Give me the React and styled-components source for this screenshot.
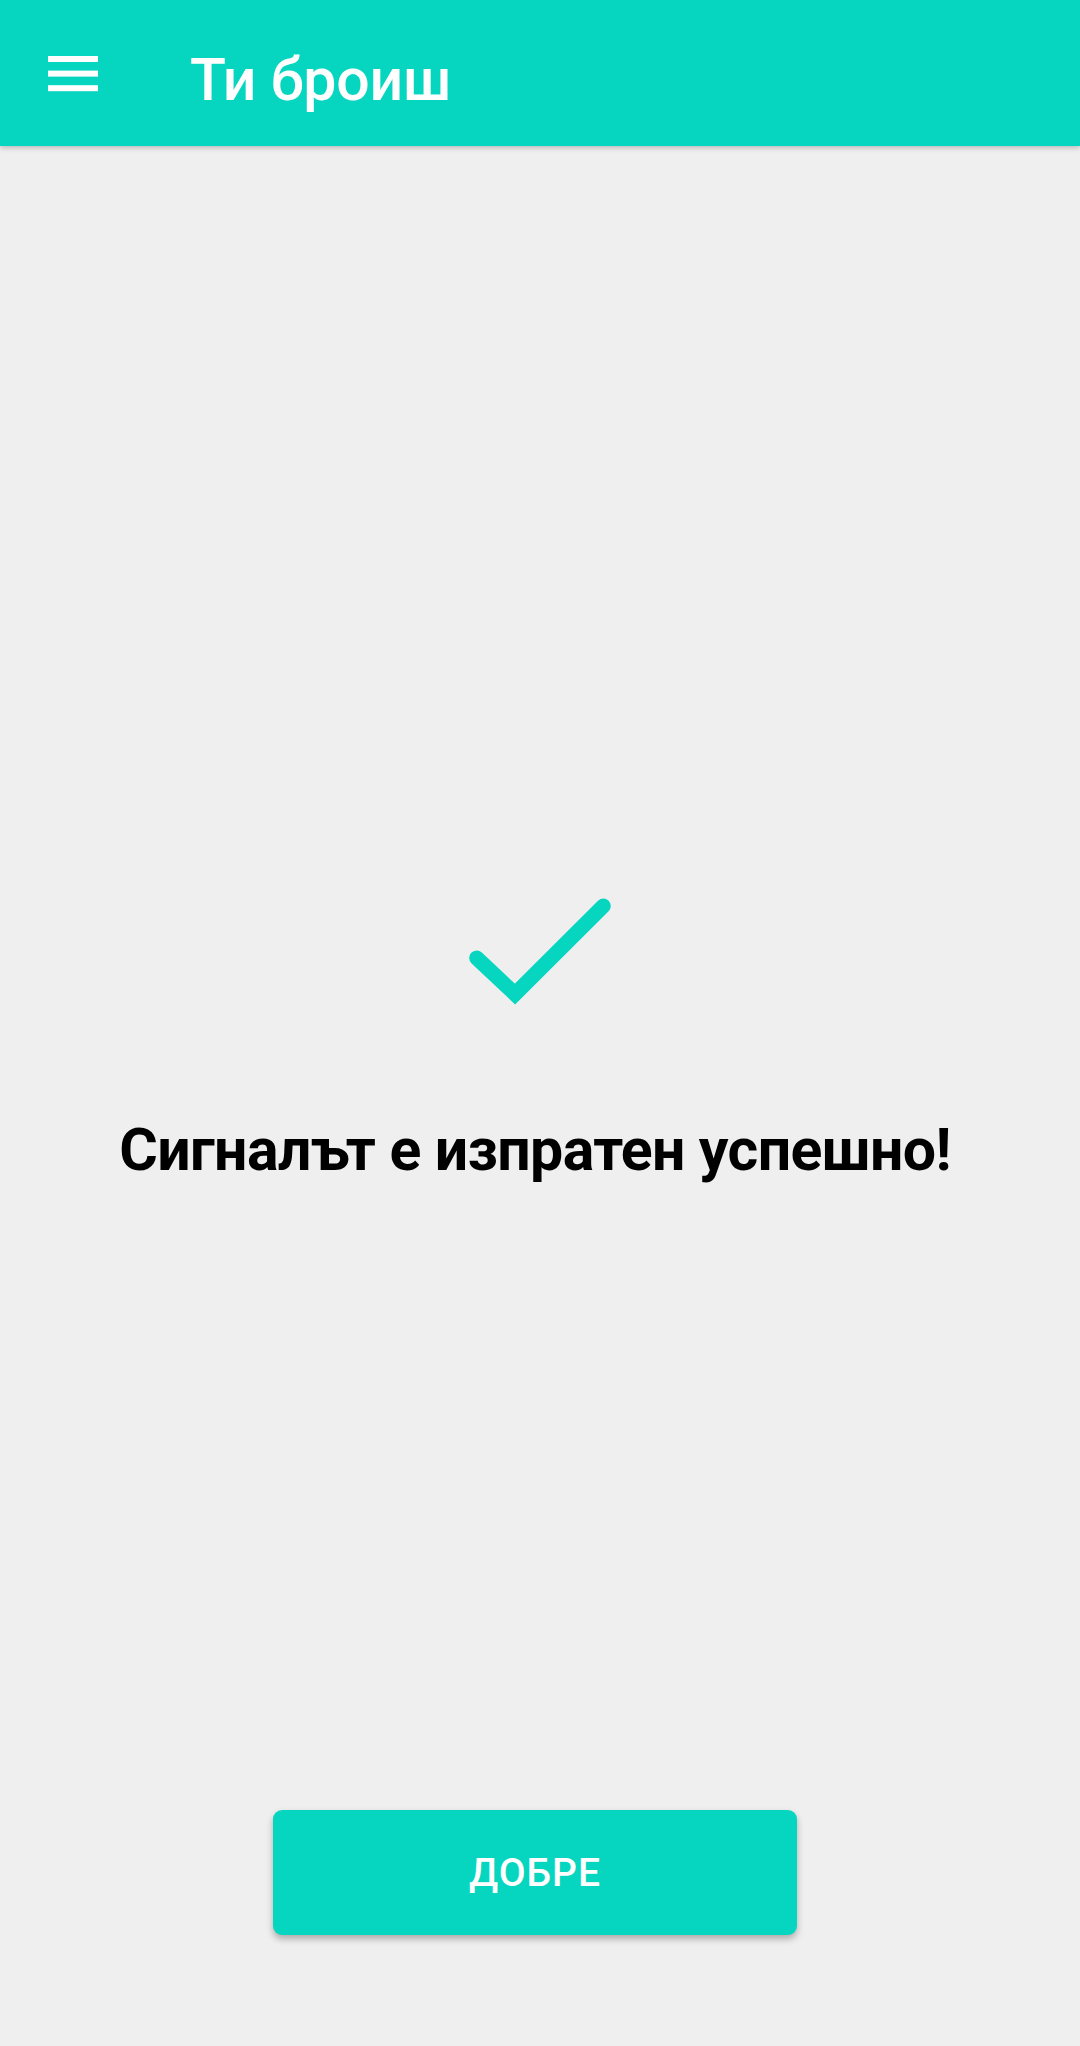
import React from "react";
import styled, { createGlobalStyle } from "styled-components";

const GlobalStyle = createGlobalStyle`
  html, body { margin: 0; padding: 0; background: #efefef; }
  body { font-family: Roboto, "Noto Sans", "Liberation Sans", sans-serif; }
  * { box-sizing: border-box; }
`;

const Page = styled.div`
  min-height: 100vh;
  display: flex;
  flex-direction: column;
  background: #efefef;
`;

const Toolbar = styled.header`
  height: 146px;
  background: #06d6c0;
  display: flex;
  align-items: center;
  padding-left: 40px;
  box-shadow: 0 2px 5px rgba(0, 0, 0, 0.22);
  position: relative;
  z-index: 1;
  flex-shrink: 0;
`;

const MenuButton = styled.button`
  width: 66px;
  height: 66px;
  padding: 0;
  border: none;
  background: transparent;
  display: flex;
  align-items: center;
  justify-content: center;
  margin-top: 2px;
`;

const Title = styled.h1`
  margin: 13px 0 0 84px;
  font-size: 59px;
  line-height: 70px;
  font-weight: 500;
  color: #ffffff;
  letter-spacing: -0.2px;
`;

const Body = styled.main`
  flex: 1;
  display: flex;
  flex-direction: column;
  align-items: center;
  padding-top: 746px;
`;

const Check = styled.svg`
  width: 160px;
  height: 120px;
  display: block;
`;

const Message = styled.p`
  margin: 103px 0 0;
  font-size: 59px;
  line-height: 70px;
  font-weight: 700;
  color: #000;
  text-align: center;
  letter-spacing: -0.6px;
  padding-right: 10px;
`;

const Footer = styled.footer`
  display: flex;
  justify-content: center;
  padding: 0 10px 111px 0;
`;

const PrimaryButton = styled.button`
  width: 524px;
  height: 125px;
  border: none;
  border-radius: 9px;
  background: #06d6c0;
  color: #ffffff;
  font-family: Roboto, "Noto Sans", sans-serif;
  font-size: 39px;
  font-weight: 500;
  letter-spacing: 1px;
  text-transform: uppercase;
  box-shadow: 0 4px 7px rgba(0, 0, 0, 0.28);
`;

export default function App() {
  return (
    <>
      <GlobalStyle />
      <Page>
        <Toolbar>
          <MenuButton aria-label="menu">
            <svg width="50" height="36" viewBox="0 0 50 36">
              <rect x="0" y="0" width="50" height="6" fill="#fff" />
              <rect x="0" y="14.6" width="50" height="6" fill="#fff" />
              <rect x="0" y="29.2" width="50" height="6" fill="#fff" />
            </svg>
          </MenuButton>
          <Title>Ти броиш</Title>
        </Toolbar>
        <Body>
          <Check viewBox="0 0 160 120">
            <polyline
              points="16.7,66 55,102 143.3,14"
              fill="none"
              stroke="#06d6c0"
              strokeWidth="15"
              strokeLinecap="round"
              strokeLinejoin="miter"
            />
          </Check>
          <Message>Сигналът е изпратен успешно!</Message>
        </Body>
        <Footer>
          <PrimaryButton>Добре</PrimaryButton>
        </Footer>
      </Page>
    </>
  );
}
